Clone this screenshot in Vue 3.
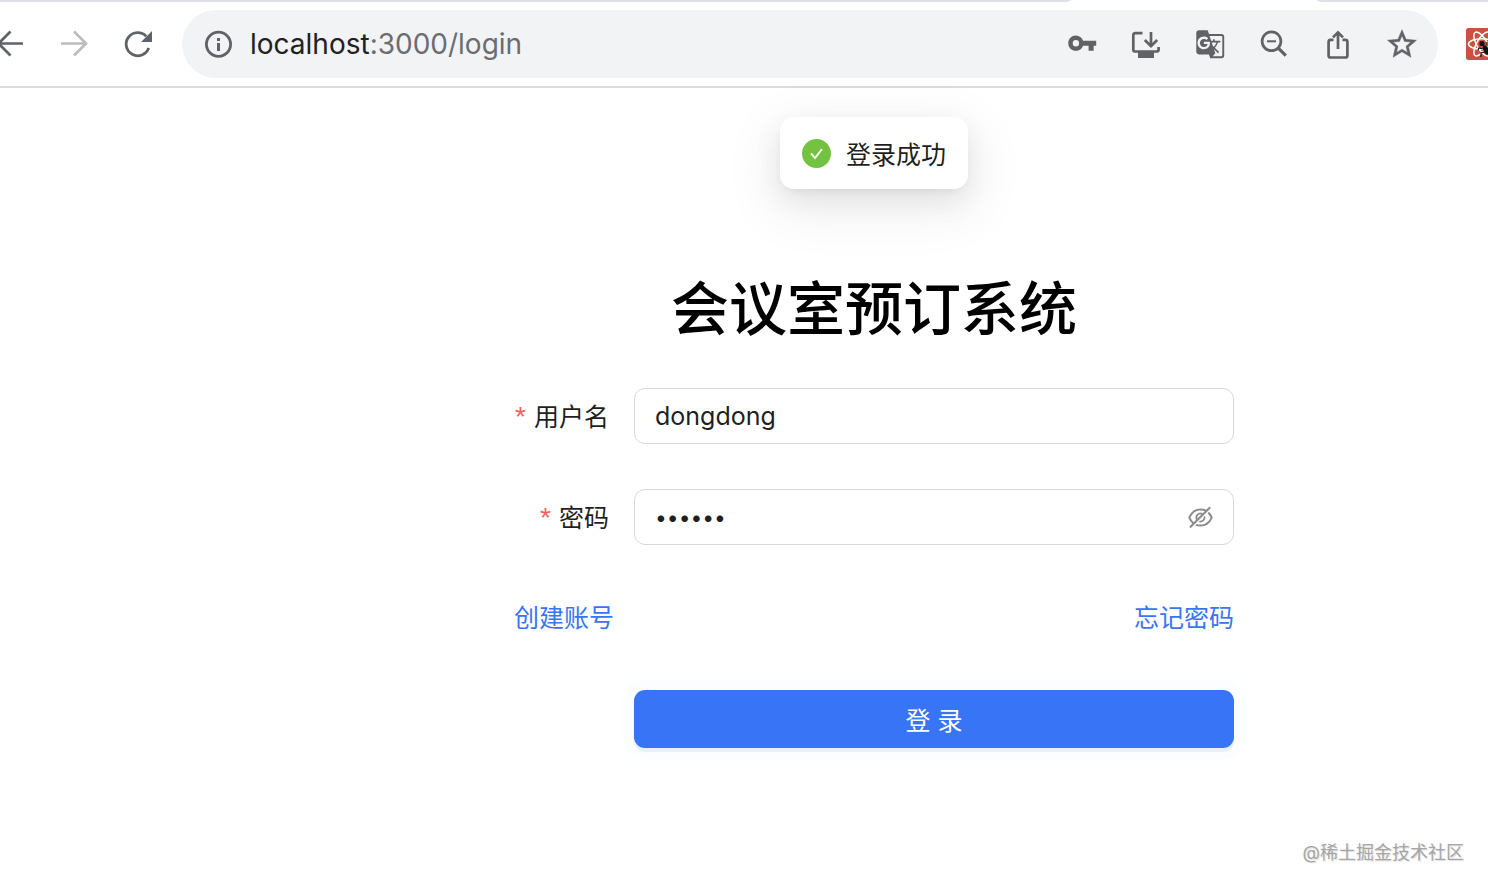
<template>
  <div class="screen">
    <!-- ── Browser toolbar ── -->
    <header class="browser">
      <div class="tab-strip">
        <span class="strip-left"></span>
        <span class="strip-right"></span>
      </div>
      <div class="toolbar">
        <nav class="nav-buttons">
          <button class="icon-btn" type="button" aria-label="后退">
            <svg viewBox="0 0 32 32" class="line"><path d="M29 15.5H5M16.5 3.5L4.5 15.5l12 12" /></svg>
          </button>
          <button class="icon-btn muted" type="button" aria-label="前进">
            <svg viewBox="0 0 32 32" class="line"><path d="M3 15.5h24M16 3.5l12 12-12 12" /></svg>
          </button>
          <button class="icon-btn" type="button" aria-label="重新加载">
            <svg viewBox="0 0 32 32">
              <path d="M26.7 20A11.6 11.6 0 1 1 24.2 8.2" fill="none" stroke="currentColor" stroke-width="2.8" />
              <path d="M30 3v11H19z" />
            </svg>
          </button>
        </nav>

        <div class="address-bar">
          <button class="icon-btn" type="button" aria-label="网站信息">
            <svg viewBox="0 0 32 32">
              <circle cx="16.5" cy="16.2" r="12.1" fill="none" stroke="currentColor" stroke-width="2.8" />
              <path d="M15 10h3v3h-3zM15 15h3v8h-3z" />
            </svg>
          </button>
          <div class="url" role="textbox" aria-label="地址" contenteditable="true" spellcheck="false">localhost<span class="url-path">:3000/login</span></div>
          <div class="page-actions">
            <button class="icon-btn" type="button" aria-label="密码管理">
              <svg viewBox="0 0 32 32">
                <path transform="translate(1 0) scale(1.27)" d="M12.65 10C11.83 7.67 9.61 6 7 6c-3.31 0-6 2.69-6 6s2.69 6 6 6c2.61 0 4.83-1.67 5.65-4H17v4h4v-4h2v-4H12.65zM7 14.5a2.5 2.5 0 1 1 0-5 2.5 2.5 0 0 1 0 5z" />
              </svg>
            </button>
            <button class="icon-btn" type="button" aria-label="安装应用">
              <svg viewBox="0 0 32 32">
                <path class="line" d="M12.5 5.2H5.2Q3.3 5.2 3.3 7v14.5Q3.3 23.5 5.2 23.5H26.5Q28.6 23.5 28.6 21.5V19M21 4v13M14.8 12l6.2 6.2 6.2-6.2" />
                <path d="M8 24h16v6H8z" />
              </svg>
            </button>
            <button class="icon-btn" type="button" aria-label="翻译">
              <svg viewBox="0 0 32 32">
                <path transform="translate(1 1) scale(1.27)" d="M21 4H11l-1-3H3c-1.1 0-2 .9-2 2v15c0 1.1.9 2 2 2h8l1 3h9c1.1 0 2-.9 2-2V6c0-1.1-.9-2-2-2zM7 16c-2.76 0-5-2.24-5-5s2.24-5 5-5c1.35 0 2.48.5 3.35 1.3L9.03 8.57c-.38-.36-1.04-.78-2.03-.78-1.74 0-3.15 1.44-3.15 3.21S5.26 14.21 7 14.21c2.01 0 2.84-1.44 2.92-2.41H7v-1.71h4.68c.07.31.12.61.12 1.02C11.8 13.97 9.89 16 7 16zm6.17-5.42h3.7c-.43 1.25-1.11 2.43-2.05 3.47-.31-.35-.6-.72-.86-1.1l-.79-2.37zm8.33 9.92c0 .55-.45 1-1 1H14l2-2.5-1.04-3.1 3.1 3.1.92-.92-3.3-3.25.02-.02c1.13-1.25 1.93-2.69 2.4-4.22H20v-1.3h-4.53V8h-1.29v1.29h-1.44L11.46 5.5h9.04c.55 0 1 .45 1 1v14z" />
              </svg>
            </button>
            <button class="icon-btn" type="button" aria-label="缩放">
              <svg viewBox="0 0 32 32" class="line">
                <circle cx="13.5" cy="13.3" r="9.4" />
                <path d="M9 13.3h9" stroke-width="2" />
                <path d="M20.3 20.1l7.5 7.5" stroke-width="3.2" />
              </svg>
            </button>
            <button class="icon-btn" type="button" aria-label="分享">
              <svg viewBox="0 0 32 32" class="line">
                <path d="M11.5 11.8H8.6Q6.6 11.8 6.6 13.8V27.5Q6.6 29.5 8.6 29.5H23.4Q25.4 29.5 25.4 27.5V13.8Q25.4 11.8 23.4 11.8H20.5M16 5v16M11 9.4l5-5 5 5" />
              </svg>
            </button>
            <button class="icon-btn" type="button" aria-label="收藏">
              <svg viewBox="0 0 32 32">
                <path transform="translate(-1.4 -1.2) scale(1.45)" stroke="currentColor" stroke-width="0.3" d="M22 9.24l-7.19-.62L12 2 9.19 8.63 2 9.24l5.46 4.73L5.82 21 12 17.27 18.18 21l-1.63-7.03L22 9.24zM12 15.4l-3.76 2.27 1-4.28-3.32-2.88 4.38-.38L12 6.1l1.71 4.04 4.38.38-3.32 2.88 1 4.28L12 15.4z" />
              </svg>
            </button>
          </div>
        </div>

        <button class="icon-btn" type="button" aria-label="React 开发者工具">
          <svg viewBox="0 0 32 32">
            <rect width="32" height="32" rx="2.5" fill="#c9513f" />
            <g fill="none" stroke="#fff" stroke-width="1.5">
              <ellipse cx="16" cy="16" rx="13.5" ry="5.2" />
              <ellipse cx="16" cy="16" rx="13.5" ry="5.2" transform="rotate(60 16 16)" />
              <ellipse cx="16" cy="16" rx="13.5" ry="5.2" transform="rotate(120 16 16)" />
            </g>
            <g fill="#111" stroke="#111" stroke-width="1.2">
              <circle cx="16" cy="15.5" r="2" />
              <ellipse cx="20" cy="22" rx="2" ry="4.5" transform="rotate(-25 20 22)" />
              <path d="M17 21l-4-1-1 2M18 24l-3 1v4M21 18v-4M23 20l3-2" fill="none" />
            </g>
          </svg>
        </button>
      </div>
    </header>

    <!-- ── Login page ── -->
    <main class="page">
      <div class="toast" role="status">
        <svg class="toast-icon" viewBox="0 0 29 29">
          <circle cx="14.5" cy="14.5" r="14.5" fill="#73c240" />
          <path d="M9 14.3l4 4.7 7-8.8" fill="none" stroke="#fff" stroke-width="1.9" />
        </svg>
        <span>登录成功</span>
      </div>

      <h1 class="title">会议室预订系统</h1>

      <form class="login-form" @submit.prevent>
        <div class="form-row">
          <label class="label" for="username"><span class="star">*</span>用户名</label>
          <div class="control">
            <input id="username" v-model="username" type="text" autocomplete="off" />
          </div>
        </div>

        <div class="form-row">
          <label class="label" for="password"><span class="star">*</span>密码</label>
          <div class="control">
            <input id="password" v-model="password" :type="visible ? 'text' : 'password'" autocomplete="off" />
            <button class="eye" type="button" aria-label="显示密码" @click="visible = !visible">
              <svg viewBox="64 64 896 896">
                <path d="M942.2 486.2Q889.47 375.11 816.7 305l-50.88 50.88C807.31 395.53 843.45 447.4 874.7 512 791.5 684.2 673.4 766 512 766q-72.67 0-133.87-22.38L323 798.75Q408 838 512 838q288.3 0 430.2-300.3a60.29 60.29 0 000-51.5zm-63.57-320.64L836 122.88a8 8 0 00-11.32 0L715.31 232.2Q624.86 186 512 186q-288.3 0-430.2 300.3a60.3 60.3 0 000 51.5q56.69 119.4 136.5 191.41L112.48 835a8 8 0 000 11.31L155.17 889a8 8 0 0011.31 0l712.15-712.12a8 8 0 000-11.32zM149.3 512C232.6 339.8 350.7 258 512 258c54.54 0 104.13 9.36 149.12 28.39l-70.3 70.3a176 176 0 00-238.13 238.13l-83.42 83.42C223.1 637.49 183.3 582.28 149.3 512zm246.7 0a112.11 112.11 0 01146.2-106.69L401.31 546.2A112 112 0 01396 512z" />
                <path d="M508 624c-3.46 0-6.87-.16-10.25-.47l-52.82 52.82a176.09 176.09 0 00227.42-227.42l-52.82 52.82c.31 3.38.47 6.79.47 10.25a111.94 111.94 0 01-112 112z" />
              </svg>
            </button>
          </div>
        </div>

        <div class="links">
          <a href="#register">创建账号</a>
          <a href="#forgot">忘记密码</a>
        </div>

        <div class="form-row">
          <span class="label"></span>
          <button class="submit" type="submit">登 录</button>
        </div>
      </form>
    </main>

    <span class="watermark">@稀土掘金技术社区</span>
  </div>
</template>

<script setup>
import { ref } from 'vue'

const username = ref('dongdong')
const password = ref('111111')
const visible = ref(false)
</script>

<style>
body {
  margin: 0;
  background: #fff;
}
</style>

<style scoped>
.screen {
  position: relative;
  min-height: 100vh;
  overflow: hidden;
  font-family: Inter, "Noto Sans CJK SC", sans-serif;
  font-size: 25px;
  color: #1f1f1f;
}

button,
input {
  font: inherit;
  color: inherit;
  border: none;
  outline: none;
  background: none;
  padding: 0;
  margin: 0;
}
button { cursor: pointer; }

/* ── Browser toolbar ── */
.browser {
  border-bottom: 2px solid #dadbdd;
  overflow: hidden;
}
.tab-strip {
  display: flex;
  justify-content: space-between;
  height: 2px;
}
.strip-left,
.strip-right { background: #dfdfe5; }
.strip-left {
  width: 72%;
  border-bottom-right-radius: 8px 2px;
}
.strip-right {
  width: 11.5%;
  border-bottom-left-radius: 8px 2px;
}
.toolbar {
  display: flex;
  align-items: center;
  gap: 28px;
  margin: 0 -10px 0 -6px;
  padding: 8px 0;
}
.nav-buttons,
.page-actions {
  display: flex;
  gap: 32px;
}
.icon-btn {
  width: 32px;
  height: 32px;
  flex-shrink: 0;
  color: #5f6368;
}
.icon-btn svg {
  display: block;
  width: 32px;
  height: 32px;
  fill: currentColor;
}
.icon-btn.muted { color: #babcbe; }
.icon-btn .line {
  fill: none;
  stroke: currentColor;
  stroke-width: 2.7;
}
.address-bar {
  flex: 1;
  display: flex;
  align-items: center;
  gap: 16px;
  height: 68px;
  padding: 0 20px;
  box-sizing: border-box;
  border-radius: 34px;
  background: #f1f3f4;
}
.page-actions .icon-btn { color: #606265; }
.url {
  flex: 1;
  font-size: 28px;
  line-height: 36px;
  white-space: nowrap;
  outline: none;
  color: #202124;
}
.url-path { color: #6b6d70; }

/* ── Login page ── */
.page {
  position: relative;
  margin-left: 260px;
  padding: 181px 254px 60px;
}
.toast {
  position: absolute;
  top: 29px;
  left: 50%;
  transform: translateX(-50%);
  display: flex;
  align-items: center;
  gap: 15px;
  height: 72px;
  padding: 0 22px;
  border-radius: 14px;
  background: #fff;
  white-space: nowrap;
  box-shadow:
    0 11px 29px 0 rgba(0,0,0,0.08),
    0 5px 11px -7px rgba(0,0,0,0.12),
    0 16px 50px 14px rgba(0,0,0,0.05);
}
.toast-icon {
  width: 29px;
  height: 29px;
}
.title {
  margin: 0 0 39px;
  font-size: 58px;
  font-weight: 500;
  line-height: 80px;
  text-align: center;
  color: #000;
}
.login-form {
  display: flex;
  flex-direction: column;
  gap: 43px;
}
.form-row {
  display: flex;
  gap: 25px;
}
.label {
  width: 95px;
  height: 58px;
  flex-shrink: 0;
  display: flex;
  align-items: center;
  justify-content: flex-end;
  gap: 8px;
  line-height: 58px;
  white-space: nowrap;
}
.star {
  font-family: "Liberation Sans", sans-serif;
  font-size: 28px;
  color: #f0625d;
}
.control {
  flex: 1;
  display: flex;
  align-items: center;
  height: 56px;
  padding: 0 20px;
  box-sizing: border-box;
  border: 1px solid #d9d9d9;
  border-radius: 11px;
}
.control input {
  flex: 1;
  min-width: 0;
}
.control input[type="password"] { font-size: 21px; }
.eye {
  width: 25px;
  height: 25px;
  color: #8c8c8c;
}
.eye svg {
  display: block;
  fill: currentColor;
}
.links {
  display: flex;
  justify-content: space-between;
  line-height: 57px;
}
.links a {
  color: #3875f6;
  text-decoration: none;
}
.submit {
  flex: 1;
  height: 58px;
  border-radius: 11px;
  background: #3875f6;
  color: #fff;
  box-shadow:
    0 4px 0 rgba(5,95,255,0.08),
    0 0 0 11px rgba(56,117,246,0.015);
}

.watermark {
  position: absolute;
  right: 24px;
  bottom: 22px;
  font-size: 18px;
  line-height: 26px;
  color: #a6a6a6;
  text-shadow: 1px 1px 1px #ddd;
}
</style>
